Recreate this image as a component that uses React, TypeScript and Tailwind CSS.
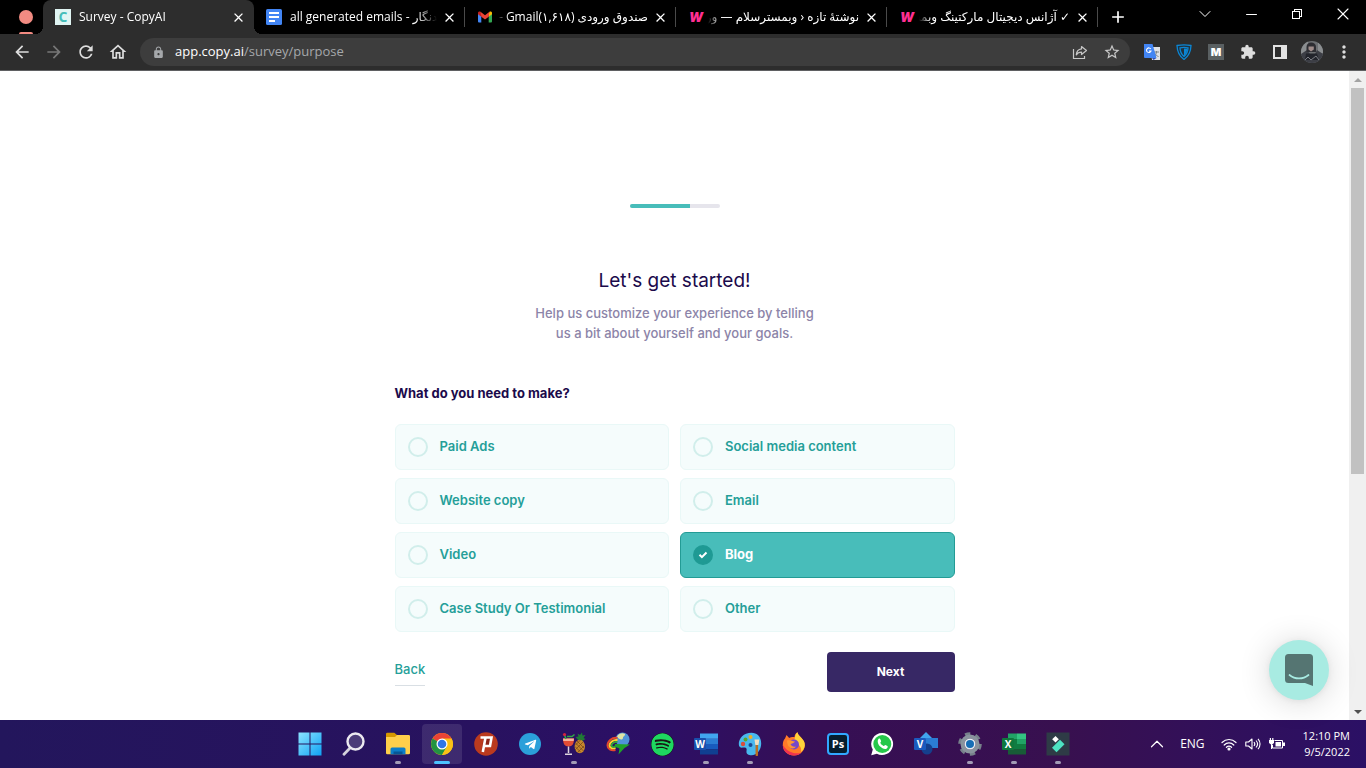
import { useState, ReactNode } from 'react';
import {
  MdAdd,
  MdArrowBack,
  MdArrowForward,
  MdClose,
  MdExtension,
  MdLock,
  MdMoreVert,
  MdOutlineHome,
  MdRefresh,
  MdStarBorder,
} from 'react-icons/md';
import { FaTelegramPlane, FaSpotify } from 'react-icons/fa';
import { ChevronDown, ChevronUp, Minus, X } from 'lucide-react';

const UI_FONT = "font-['Open_Sans','DejaVu_Sans',sans-serif]";

/* ---------- Browser chrome ---------- */

function CopyFavicon() {
  return (
    <span className="flex h-4 w-4 items-center justify-center bg-[#e0f5f3] text-sm leading-4 font-bold text-[#45bdb9]">
      C
    </span>
  );
}

function DocsFavicon() {
  return (
    <svg viewBox="0 0 16 16" className="h-4 w-4">
      <rect width="16" height="16" rx="1.5" fill="#4285f4" />
      <path d="M3 4h10M3 8h10M3 12h6" stroke="#fff" strokeWidth="1.8" />
    </svg>
  );
}

function GmailFavicon() {
  return (
    <svg viewBox="0 0 16 16" className="h-4 w-4">
      <path d="M1 4v8.5a1 1 0 0 0 1 1h2.3V7z" fill="#4285f4" />
      <path d="M15 4v8.5a1 1 0 0 1-1 1h-2.3V7z" fill="#34a853" />
      <path d="M11.7 4.2v3.6L15 5.3V4c0-1.4-1.5-1.9-2.5-1.2z" fill="#fbbc04" />
      <path d="M1 4v1.3l3.3 2.5V4.2L3.5 2.8C2.5 2.1 1 2.6 1 4z" fill="#c5221f" />
      <path d="M3.5 2.8 8 6.3l4.5-3.5-.8 5L8 10.5 4.3 7.8z" fill="#ea4335" />
    </svg>
  );
}

function WebFavicon() {
  return (
    <span className="flex h-4 w-4 items-center justify-center font-['Inter',sans-serif] text-[13px] leading-4 font-black text-[#ff2f92] italic">
      W
    </span>
  );
}

interface TabProps {
  title: string;
  icon: ReactNode;
  active?: boolean;
  rtl?: boolean;
}

function Tab({ title, icon, active, rtl }: TabProps) {
  return (
    <div
      role="tab"
      aria-selected={!!active}
      className={`relative flex h-full w-[211px] min-w-0 items-center pr-2 pl-3 text-xs text-white ${
        active
          ? 'rounded-t-lg bg-[#2d2d2d]'
          : "after:absolute after:right-0 after:h-5 after:w-px after:bg-[#4a4a4a] after:content-['']"
      }`}
    >
      {active && (
        <>
          <span className="absolute bottom-0 -left-2 h-2 w-2 bg-[radial-gradient(circle_at_0_0,transparent_8px,#2d2d2d_8px)]" />
          <span className="absolute -right-2 bottom-0 h-2 w-2 bg-[radial-gradient(circle_at_100%_0,transparent_8px,#2d2d2d_8px)]" />
        </>
      )}
      <span className="shrink-0">{icon}</span>
      <span
        dir={rtl ? 'rtl' : 'ltr'}
        className={`mr-1 flex-1 overflow-hidden whitespace-nowrap ${
          rtl
            ? 'ml-1 [mask-image:linear-gradient(to_right,transparent,#000_12px)]'
            : 'ml-2 [mask-image:linear-gradient(to_left,transparent,#000_20px)]'
        }`}
      >
        {title}
      </span>
      <button type="button" aria-label="Close tab" className="flex w-4 shrink-0 justify-center">
        <MdClose size={15} />
      </button>
    </div>
  );
}

function TabStrip() {
  return (
    <div className="flex h-[34px] bg-black">
      <div className="relative flex w-[43px] shrink-0 items-center justify-center pl-2">
        <span className="h-3.5 w-3.5 rounded-full bg-[#f28b82]" />
        <span className="absolute bottom-0 h-0.5 w-3.5 rounded-t bg-[#f28b82]" />
      </div>
      <div role="tablist" className="flex min-w-0">
        <Tab active title="Survey - CopyAI" icon={<CopyFavicon />} />
        <Tab title="all generated emails - سندنگار" icon={<DocsFavicon />} />
        <Tab rtl title="صندوق ورودی (۱,۶۱۸)Gmail -" icon={<GmailFavicon />} />
        <Tab rtl title="نوشتهٔ تازه ‹ وبمسترسلام — وردپرس" icon={<WebFavicon />} />
        <Tab rtl title="✓ آژانس دیجیتال مارکتینگ وبمستر" icon={<WebFavicon />} />
      </div>
      <button type="button" aria-label="New tab" className="flex w-10 shrink-0 items-center justify-center text-white">
        <MdAdd size={20} />
      </button>
      <div className="ml-auto flex h-7 text-white">
        <button type="button" aria-label="Search tabs" className="flex w-[46px] items-center justify-center">
          <ChevronDown size={20} strokeWidth={1.2} />
        </button>
        <button type="button" aria-label="Minimize" className="flex w-[46px] items-center justify-center">
          <Minus size={17} strokeWidth={1.5} />
        </button>
        <button type="button" aria-label="Restore" className="flex w-[46px] items-center justify-center">
          <svg viewBox="0 0 10 10" className="h-2.5 w-2.5" fill="none" stroke="currentColor" shapeRendering="crispEdges">
            <path d="M.5 2.5h7v7h-7zM2.5 2.5v-2h7v7h-2" />
          </svg>
        </button>
        <button type="button" aria-label="Close" className="flex w-[46px] items-center justify-center">
          <X size={20} strokeWidth={1.3} />
        </button>
      </div>
    </div>
  );
}

function ToolButton({ label, children }: { label: string; children: ReactNode }) {
  return (
    <button type="button" aria-label={label} className="flex h-7 w-8 shrink-0 items-center justify-center">
      {children}
    </button>
  );
}

function Toolbar() {
  return (
    <div className="flex h-[37px] items-center gap-1.5 border-b border-[#5f6062] bg-[#2d2d2d] px-1.5 text-[#dedede]">
      <div className="flex">
        <ToolButton label="Back">
          <MdArrowBack size={20} />
        </ToolButton>
        <ToolButton label="Forward">
          <MdArrowForward size={20} className="text-[#777]" />
        </ToolButton>
        <ToolButton label="Reload">
          <MdRefresh size={20} />
        </ToolButton>
        <ToolButton label="Home">
          <MdOutlineHome size={20} />
        </ToolButton>
      </div>
      <div className="flex h-7 flex-1 items-center rounded-full bg-[#3d3d3d] pr-0.5 pl-3">
        <MdLock size={13} className="mr-2.5 text-[#a5a8ab]" />
        <div className="flex-1 text-[13px] text-[#a5a8ab]">
          <span className="text-white">app.copy.ai</span>/survey/purpose
        </div>
        <ToolButton label="Share">
          <svg viewBox="0 0 16 16" className="h-4 w-4" fill="none" stroke="#c7c7c7" strokeWidth="1.2">
            <path d="M1.5 5v9.5h11V12" />
            <path
              d="M9.5 2.5 14.5 6.5l-5 4V8.2C7 8.2 5.5 9 4.3 10.8 4.5 7.5 6.3 5.3 9.5 4.9z"
              strokeLinejoin="round"
            />
          </svg>
        </ToolButton>
        <ToolButton label="Bookmark">
          <MdStarBorder size={18} className="text-[#c7c7c7]" />
        </ToolButton>
      </div>
      <div className="flex">
        <ToolButton label="Google Translate">
          <svg viewBox="0 0 16 16" className="h-4 w-4">
            <path d="M6 3h10v13H8z" fill="#dfe1e5" />
            <path
              d="M10 8h5M12.5 7v1c0 2-1.5 4-2.5 4.5M11 9.5c.5 1.5 2 2.5 3.5 3"
              stroke="#7c8388"
              fill="none"
            />
            <path d="M0 0h8.5l4 14H1a1 1 0 0 1-1-1z" fill="#4285f4" />
            <path d="m8 14 4.5 0-3 2z" fill="#3050b8" />
            <path d="M6.8 5A2.3 2.3 0 1 0 7 7H5" stroke="#fff" strokeWidth="1.1" fill="none" />
          </svg>
        </ToolButton>
        <ToolButton label="VPN">
          <svg viewBox="0 0 16 16" className="h-4 w-4" fill="none" stroke="#0c86d4" strokeWidth="1.3">
            <path d="M1 1.5C6 .5 10 .5 15 1.5 14.8 8 13 12 8 15.5 3 12 1.2 8 1 1.5z" fill="#20323e" />
            <path d="M4 3.8c3-.6 5-.6 8 0 0 3.7-1 6.2-4 8.700-3-2.5-4-5-4-8.700z" />
            <path d="M8 4.5V12c2-1.8 3-4 3.300-7.3z" fill="#0c86d4" stroke="none" />
          </svg>
        </ToolButton>
        <ToolButton label="M extension">
          <span className="flex h-4 w-4 items-center justify-center bg-[#5a6062] font-['Inter',sans-serif] text-[11px] leading-4 font-black text-white">
            M
          </span>
        </ToolButton>
        <ToolButton label="Extensions">
          <MdExtension size={16} />
        </ToolButton>
        <ToolButton label="Side panel">
          <svg viewBox="0 0 14 14" className="h-3.5 w-3.5">
            <path d="M0 0h14v14H0zM2 2v10h6V2z" fill="#e2e2e2" fillRule="evenodd" />
          </svg>
        </ToolButton>
        <ToolButton label="Profile">
          <svg viewBox="0 0 22 22" className="h-[22px] w-[22px]">
            <clipPath id="avatar">
              <circle cx="11" cy="11" r="11" />
            </clipPath>
            <g clipPath="url(#avatar)">
              <rect width="22" height="22" fill="#6d7073" />
              <path d="M0 0h7v13H0zM17 2h5v10h-5z" fill="#8b8e90" />
              <path d="M0 13 6 9l3 4h5l2-4 6 4v9H0z" fill="#3c3e45" />
              <path d="M5.5 6c0-3 2-4.5 4.7-4.5S15 3 15 6v5H5.5z" fill="#2e2e33" />
              <path d="M7.5 5.5h5.3v3L10 10.500 7.500 8.500z" fill="#a08d8b" />
              <path d="M5 12.500h11l2 6.500H4z" fill="#22242b" />
              <path d="m3 20 4-4 3 3 5-4 3 4" stroke="#7d7f85" fill="none" />
            </g>
          </svg>
        </ToolButton>
        <ToolButton label="Menu">
          <MdMoreVert size={20} />
        </ToolButton>
      </div>
    </div>
  );
}

/* ---------- Survey page ---------- */

const OPTIONS = [
  'Paid Ads',
  'Social media content',
  'Website copy',
  'Email',
  'Video',
  'Blog',
  'Case Study Or Testimonial',
  'Other',
];

interface OptionProps {
  label: string;
  checked: boolean;
  onSelect: () => void;
}

function OptionCard({ label, checked, onSelect }: OptionProps) {
  return (
    <label
      className={`flex h-[46px] cursor-pointer items-center gap-3 rounded-md border px-3 text-[13px] ${
        checked
          ? 'border-[#239b95] bg-[#48bdba] font-bold text-white'
          : 'border-[#e9f8f7] bg-[#f5fcfc] font-semibold text-[#259f99]'
      }`}
    >
      <span className="relative flex h-5 w-5 items-center justify-center">
        <input
          type="radio"
          name="purpose"
          checked={checked}
          onChange={onSelect}
          className="h-5 w-5 appearance-none rounded-full border-2 border-[#d1eeeb] checked:border-[#1f9a94] checked:bg-[#1f9a94]"
        />
        {checked && (
          <svg viewBox="0 0 10 8" className="absolute h-2 w-2.5" fill="none" stroke="#fff" strokeWidth="2">
            <path d="m1.5 3.8 2.4 2.4 4.600-4.700" />
          </svg>
        )}
      </span>
      {label}
    </label>
  );
}

function Survey() {
  const [selected, setSelected] = useState('Blog');

  return (
    <form
      className="mx-auto w-full max-w-[560px] pt-[133px] pb-6 font-['Inter',sans-serif]"
      onSubmit={(e) => e.preventDefault()}
    >
      <div className="mx-auto h-1 w-[90px] overflow-hidden rounded-full bg-[#e6e5ec]">
        <div className="h-full w-2/3 bg-[#48bdba]" />
      </div>
      <h1 className="mt-[59px] text-center text-[19px] leading-7 text-[#1b0a4b]">Let's get started!</h1>
      <p className="mx-auto mt-2 max-w-[288px] text-center text-[13px] leading-5 font-medium text-[#8c84a8]">
        Help us customize your experience by telling us a bit about yourself and your goals.
      </p>
      <fieldset className="mt-10">
        <legend className="text-[13px] leading-5 font-bold text-[#1b0a4b]">What do you need to make?</legend>
        <div className="mt-[21px] grid grid-cols-2 gap-x-[11px] gap-y-2">
          {OPTIONS.map((option) => (
            <OptionCard
              key={option}
              label={option}
              checked={selected === option}
              onSelect={() => setSelected(option)}
            />
          ))}
        </div>
      </fieldset>
      <div className="mt-5 flex items-start justify-between">
        <a
          href="#back"
          className="mt-[3px] border-b border-[#d9dfe4] pt-1 pb-1.5 text-[13px] leading-5 font-medium text-[#259f99]"
        >
          Back
        </a>
        <button type="submit" className="h-10 w-32 rounded bg-[#372865] text-xs font-bold text-white">
          Next
        </button>
      </div>
    </form>
  );
}

function ChatLauncher() {
  return (
    <button
      type="button"
      aria-label="Open chat"
      className="absolute right-5 bottom-5 flex h-[60px] w-[60px] items-center justify-center rounded-full bg-[#a8ebe2] shadow-[0_1px_6px_rgba(0,0,0,0.06),0_2px_32px_rgba(0,0,0,0.16)]"
    >
      <svg viewBox="0 0 28 32" className="h-8 w-7">
        <path
          d="M3.500 0h21A3.500 3.500 0 0 1 28 3.500V32l-8-3H3.500A3.500 3.500 0 0 1 0 25.500v-22A3.500 3.500 0 0 1 3.500 0z"
          fill="#557572"
        />
        <path
          d="M4.500 21c5.500 4.600 13.500 4.600 19 0"
          stroke="#a8ebe2"
          strokeWidth="1.7"
          strokeLinecap="round"
          fill="none"
        />
      </svg>
    </button>
  );
}

function Scrollbar() {
  return (
    <div className="flex w-[17px] shrink-0 flex-col items-center bg-[#f0f0f0]">
      <div className="flex h-[17px] items-center">
        <svg viewBox="0 0 8 4" className="h-1 w-2">
          <path d="M0 4 4 0l4 4z" fill="#a3a3a3" />
        </svg>
      </div>
      <div className="w-[13px] grow-[386] bg-[#c1c1c1]" />
      <div className="grow-[229]" />
      <div className="flex h-[17px] items-center">
        <svg viewBox="0 0 8 4" className="h-1 w-2">
          <path d="M0 0h8L4 4z" fill="#505050" />
        </svg>
      </div>
    </div>
  );
}

/* ---------- Taskbar ---------- */

function Icon({ children }: { children: ReactNode }) {
  return (
    <svg viewBox="0 0 24 24" className="h-6 w-6">
      {children}
    </svg>
  );
}

function OfficeBadge({ letter, fill }: { letter: string; fill: string }) {
  return (
    <>
      <rect x="0" y="6" width="12" height="12" rx="1" fill={fill} />
      <text x="6" y="15.5" fontSize="10" fontWeight="700" fill="#fff" textAnchor="middle">
        {letter}
      </text>
    </>
  );
}

interface TaskItem {
  name: string;
  icon: ReactNode;
  running?: boolean;
  focused?: boolean;
}

const TASKS: TaskItem[] = [
  {
    name: 'Start',
    icon: (
      <Icon>
        <defs>
          <linearGradient id="win" x1="0" y1="0" x2="1" y2="1">
            <stop offset="0" stopColor="#8ce4ff" />
            <stop offset="1" stopColor="#0fa2f5" />
          </linearGradient>
        </defs>
        <path d="M.5.5h11v11H.5zM12.500.5h11v11h-11zM.5 12.500h11v11H.5zM12.500 12.500h11v11h-11z" fill="url(#win)" />
      </Icon>
    ),
  },
  {
    name: 'Search',
    icon: (
      <Icon>
        <path d="m8.500 15.500-6.500 6.700" stroke="#d5d3dc" strokeWidth="2.8" strokeLinecap="round" />
        <circle cx="13.5" cy="9.5" r="8" fill="#4b3c78" stroke="#eceaf0" strokeWidth="2.4" />
      </Icon>
    ),
  },
  {
    name: 'File Explorer',
    running: true,
    icon: (
      <Icon>
        <path d="M0 2a1.300 1.300 0 0 1 1.300-1.300h7L11 3v5H0z" fill="#d69700" />
        <path d="M0 5h9l2-2h11.700A1.300 1.300 0 0 1 24 4.300V21a1.300 1.300 0 0 1-1.300 1.300H1.300A1.300 1.300 0 0 1 0 21z" fill="#ffcf4b" />
        <path d="M4.500 22.300V17a1.500 1.500 0 0 1 1.500-1.500h12a1.500 1.500 0 0 1 1.500 1.500v5.300z" fill="#0d7dc8" />
        <path d="M7.500 22.300v-2.800h9v2.800z" fill="#075696" />
      </Icon>
    ),
  },
  {
    name: 'Chrome',
    running: true,
    focused: true,
    icon: (
      <Icon>
        <circle cx="12" cy="12" r="11" fill="#fbc116" />
        <path d="M12 12 2.500 6.500a11 11 0 0 1 19 0z" fill="#ea4335" />
        <path d="M2.500 6.500A11 11 0 0 0 12 23l5-8.500-5-2.500z" fill="#229342" />
        <path d="M12 6.500h9.500a11 11 0 0 1-9.500 16.500l5-8.500z" fill="#fbc116" />
        <circle cx="12" cy="12" r="5.5" fill="#fff" />
        <circle cx="12" cy="12" r="4.3" fill="#2f75e8" />
      </Icon>
    ),
  },
  {
    name: 'Psiphon',
    icon: (
      <Icon>
        <circle cx="12" cy="12" r="11.8" fill="#bb3a1e" />
        <path d="M9.500 6h8l-1.500 9h-5L10 20H7.500z" fill="#8d2417" />
        <path d="M6.500 5.500h11l-1.500 8.500H9.500M11.500 5.500 8.800 20" stroke="#fff" strokeWidth="2.6" fill="none" />
      </Icon>
    ),
  },
  {
    name: 'Telegram',
    icon: (
      <span className="flex h-[22px] w-[22px] items-center justify-center rounded-full bg-[#2ba0da] text-white">
        <FaTelegramPlane size={13} />
      </span>
    ),
  },
  {
    name: 'Cocktail',
    running: true,
    icon: (
      <Icon>
        <path d="m17 9-3.500-4 3-.5-1-3 2.500 1.500L20 .5l.5 3 3-.5-2 3 2 1-4 2.500z" fill="#1f7a35" />
        <ellipse cx="17.8" cy="14.5" rx="5.2" ry="6.8" fill="#c6862c" />
        <path
          d="m13.500 11 8 8m-8.500-4.500 6 6m-4-11.500 7 7m-1-6-8 8m9-4-6 6m3-12.500-5.500 5.500"
          stroke="#6f431a"
          strokeWidth=".7"
        />
        <path d="M1 6.500h11c0 5-1.500 8-5.500 8S1 11.500 1 6.500z" fill="#e34c35" />
        <path d="M1 6.500h11l-.3 2.500H1.200z" fill="#f6b49b" />
        <path d="M6.500 14.500V21M3 22.300h7" stroke="#ddd5de" strokeWidth="1.5" />
        <path d="m4 7-1.500-4M5 4.500h5l2.500-2" stroke="#2fa844" strokeWidth="1.5" fill="none" />
        <circle cx="2.5" cy="2.5" r="1.6" fill="#d8213f" />
      </Icon>
    ),
  },
  {
    name: 'Download Manager',
    icon: (
      <Icon>
        <circle cx="16.5" cy="7.5" r="7" fill="#4f94d8" />
        <path d="M11 4.500c2-3.500 6-4 8-2.500.5 2-2 2-2 4s-3.500 2.500-6-1.500z" fill="#dfe5a5" />
        <path d="M11.500 6C6 5 1.500 9 1.500 13.500c0 3.500 3.500 5.500 8 4.500" stroke="#e3472c" strokeWidth="2" fill="none" />
        <path d="M11.500 8C7 7.500 3.500 10.500 3.500 13.500c0 2 2.500 3.500 6 2.500" stroke="#ffd32c" strokeWidth="2" fill="none" />
        <path d="M11.500 10c-3-.5-6 1.500-6 3.500 0 1.500 2 2 4 1" stroke="#35a63a" strokeWidth="1.8" fill="none" />
        <path d="m9 12 15 .5-5.500 3.500-6 6.500 1-6-5-2z" fill="#1fa32a" />
      </Icon>
    ),
  },
  { name: 'Spotify', icon: <FaSpotify size={23} className="rounded-full bg-[#191414] text-[#1ed760]" /> },
  {
    name: 'Word',
    running: true,
    icon: (
      <Icon>
        <path d="M6 1.500h18v5.300H6z" fill="#41a5ee" />
        <path d="M6 6.800h18V12H6z" fill="#2b7cd3" />
        <path d="M6 12h18v5.200H6z" fill="#185abd" />
        <path d="M6 17.200h18v5.300H6z" fill="#103f91" />
        <OfficeBadge letter="W" fill="#1850ac" />
      </Icon>
    ),
  },
  {
    name: 'Paint',
    running: true,
    icon: (
      <Icon>
        <path
          d="M13.500.8C5.500.8.8 6.500.8 12c0 3.500 2 4 4.700 3.500 3-.5 3.500 1 3 3.500-.5 3 2 4.200 5 4.200 5.500 0 9.700-5.200 9.700-11.700C23.200 4.800 19 .8 13.500.8z"
          fill="#49b8ee"
        />
        <circle cx="12.5" cy="5" r="2" fill="#f0ad22" />
        <circle cx="7.5" cy="7.5" r="2" fill="#5aa62f" />
        <circle cx="5" cy="12" r="2.2" fill="#d84d3d" />
        <circle cx="12.5" cy="13" r="2" fill="#1b4a93" />
        <path d="M18.800 12v11" stroke="#b87022" strokeWidth="2.5" strokeLinecap="round" />
        <path d="M16.500 7.500h4.800L20.500 13h-3.200z" fill="#f0dfc0" />
      </Icon>
    ),
  },
  {
    name: 'Firefox',
    icon: (
      <Icon>
        <path
          d="M3 6.500 4.500 3l2.700 3C9 4.700 11 4.800 12.500 5c0-2 1.500-4 3-4.700.5 2.500 2 3.500 4 5.700 2 2.300 3.500 4 3.300 7.500C22.500 19 18 23.500 12 23.500S.8 19 .8 13C.8 10 1.500 8 3 6.500z"
          fill="#ff7a28"
        />
        <path
          d="M15.500.3c.5 2.500 2 3.500 4 5.700 2 2.300 3.500 4 3.300 7.500-.3 3-2 5-3.800 6.500 1-5-2-8-6.500-10 0-5 1.500-9 3-9.700z"
          fill="#ffd43a"
        />
        <path d="M.8 13c0 6 5 10.500 11.200 10.500 3 0 5.500-1 7-2.500-6 1-13 0-18.200-8z" fill="#f0334f" />
        <circle cx="12" cy="12.5" r="5" fill="#7549c9" />
        <path d="M5 8.500c3-1 5 .5 8 1-1.500 2-3 2-4.500 2.500 1 2.500 3 3 5.500 2.500-2 3.500-9 2.500-9-6z" fill="#ff9632" />
      </Icon>
    ),
  },
  {
    name: 'Photoshop',
    icon: (
      <span className="flex h-[22px] w-[22px] items-center justify-center rounded border-2 border-[#31a8ff] bg-[#061e2d] text-[11px] leading-4 font-bold text-white">
        Ps
      </span>
    ),
  },
  {
    name: 'WhatsApp',
    icon: (
      <Icon>
        <path d="M12.300 1A11 11 0 0 0 2.800 17.600L1.200 23.200l5.700-1.500A11 11 0 1 0 12.300 1z" fill="#fff" />
        <circle cx="12.3" cy="12" r="9" fill="#25c84a" />
        <path
          d="M8.500 7c.8-.8 1.500-.5 1.800.2l.8 1.800c.2.700-.8 1.400-.8 1.800.6 1.500 1.800 2.500 3.300 3.200.5.200 1.200-1.200 1.800-1l2 1c.8.500 0 2.300-1 2.700-2 .8-4.500-.5-6.500-2.500S7 8.800 8.500 7z"
          fill="#fff"
        />
      </Icon>
    ),
  },
  {
    name: 'Visio',
    icon: (
      <Icon>
        <path d="m12 0 6 6-6 6-6-6z" fill="#41a5ee" />
        <path d="M12 6h12v10H12z" fill="#2b7cd3" />
        <circle cx="13" cy="17" r="5.5" fill="#153f8d" />
        <OfficeBadge letter="V" fill="#1b5abe" />
      </Icon>
    ),
  },
  {
    name: 'Settings',
    running: true,
    icon: (
      <Icon>
        <circle cx="12" cy="12" r="9.8" fill="none" stroke="#77818b" strokeWidth="4" strokeDasharray="5.13" />
        <circle cx="12" cy="12" r="7.5" fill="none" stroke="#89939d" strokeWidth="4" />
        <circle cx="12" cy="12" r="5.5" fill="#e8edf1" />
        <circle cx="12" cy="12" r="4" fill="#176eb5" />
      </Icon>
    ),
  },
  {
    name: 'Excel',
    running: true,
    icon: (
      <Icon>
        <path d="M6 1.500h9V7H6z" fill="#21a366" />
        <path d="M15 1.500h9V7h-9z" fill="#33c481" />
        <path d="M6 7h9v10H6z" fill="#107c41" />
        <path d="M15 7h9v5h-9z" fill="#21a366" />
        <path d="M15 12h9v5h-9z" fill="#107c41" />
        <path d="M6 17h18v5.500H6z" fill="#185c37" />
        <OfficeBadge letter="X" fill="#0f783d" />
      </Icon>
    ),
  },
  {
    name: 'Filmora',
    running: true,
    icon: (
      <Icon>
        <path d="M.5.5h23v23H.5z" fill="#2e3b46" />
        <path d="m9.500 4 3.300 3.300-3.300 3.300-3.300-3.300z" fill="#fff" />
        <path d="m14 7.800 4.500 4.500-8 8L6 15.800z" fill="#4de3c2" />
      </Icon>
    ),
  },
];

function Taskbar() {
  return (
    <footer
      className={`grid h-12 grid-cols-[1fr_auto_1fr] items-center bg-[linear-gradient(to_right,#23165c,#28125f_35%,#2c0f66_48%,#360f54_60%,#38104f_78%,#2b1065)] pl-0.5 text-white ${UI_FONT}`}
    >
      <div />
      <div className="flex gap-1">
        {TASKS.map((task) => (
          <button
            key={task.name}
            type="button"
            aria-label={task.name}
            className={`relative flex h-10 w-10 items-center justify-center rounded ${task.focused ? 'bg-white/10' : ''}`}
          >
            {task.icon}
            {task.running && (
              <span
                className={`absolute bottom-0 h-[3px] rounded-full ${
                  task.focused ? 'w-4 bg-[#4cc2ff]' : 'w-1.5 bg-[#a39bb5]'
                }`}
              />
            )}
          </button>
        ))}
      </div>
      <div className="flex items-center justify-end pr-4 text-[11px] leading-4">
        <ChevronUp size={22} strokeWidth={1.3} />
        <span className="ml-3 text-xs">ENG</span>
        <svg
          viewBox="0 0 16 14"
          className="ml-4 h-3.5 w-4"
          fill="none"
          stroke="#fff"
          strokeWidth="1.2"
          strokeLinecap="round"
        >
          <path d="M1 5.500c4-4 10-4 14 0M3.200 8c2.800-2.800 6.800-2.800 9.600 0M5.400 10.300c1.600-1.500 3.600-1.500 5.200 0" />
          <circle cx="8" cy="12" r="1" fill="#fff" />
        </svg>
        <svg
          viewBox="0 0 16 14"
          className="ml-2 h-3.5 w-4"
          fill="none"
          stroke="#fff"
          strokeWidth="1.1"
          strokeLinejoin="round"
        >
          <path d="M.8 5v4h2.700l3.500 3V2L3.500 5zM9 5c1 1.200 1 2.800 0 4M11 3.500c1.800 2 1.800 5 0 7M13 1.800c2.700 3 2.700 7.400 0 10.400" />
        </svg>
        <svg viewBox="0 0 16 14" className="ml-2 h-3.5 w-4">
          <path d="M5.500 3.500h8v7.500h-10V8" fill="none" stroke="#fff" />
          <path
            d="M6.500 5h5.500v4.500H6.500zM14 5.500h2v3.500h-2zM0 3h5v3L3.200 7.500V12H2V7.500L0 6zM.8 1H2v2H.8zM3.200 1h1.200v2H3.200z"
            fill="#fff"
          />
        </svg>
        <time className="ml-[18px] text-right">
          12:10 PM
          <br />
          9/5/2022
        </time>
      </div>
    </footer>
  );
}

export default function App() {
  return (
    <div className="flex min-h-screen flex-col bg-white">
      <header className={UI_FONT}>
        <TabStrip />
        <Toolbar />
      </header>
      <div className="flex flex-1">
        <main className="relative flex-1">
          <Survey />
          <ChatLauncher />
        </main>
        <Scrollbar />
      </div>
      <Taskbar />
    </div>
  );
}
